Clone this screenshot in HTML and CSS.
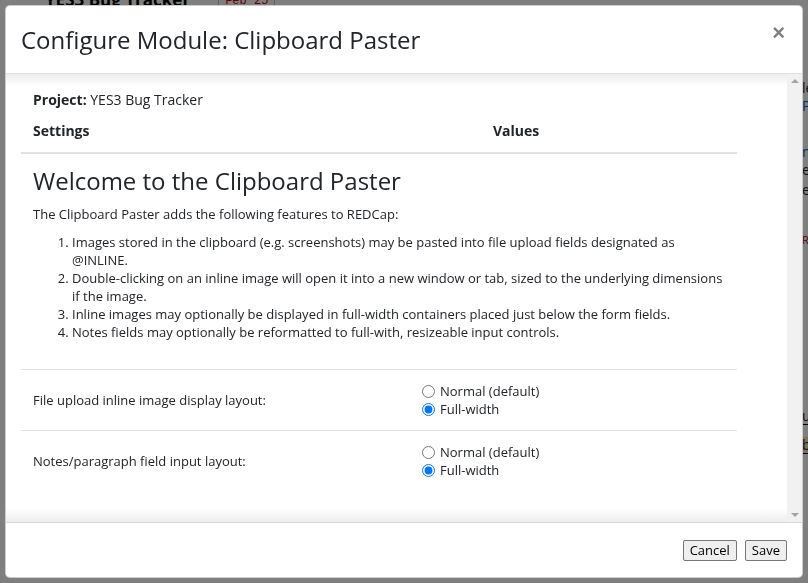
FILE: index.html
```html
<!DOCTYPE html>
<html>
<head>
<meta charset="utf-8">
<title>Configure Module</title>
<link rel="stylesheet" href="styles.css">
</head>
<body>
<div class="page">
  <div class="page-top">
    <div class="page-title">YES3 Bug Tracker</div>
    <div class="page-date">Feb 25</div>
  </div>
  <div class="page-side">
    <span class="s1">le</span>
    <span class="s2 blue">P</span>
    <span class="s3 blue">n</span>
    <span class="s4">e</span>
    <span class="s5">e</span>
    <span class="s6 red">RE</span>
    <span class="s9">u</span>
    <span class="s10">b</span>
  </div>
</div>
<div class="backdrop"></div>
<div class="modal">
  <div class="modal-header">
    <h4 class="modal-title">Configure Module: Clipboard Paster</h4>
    <button class="close" type="button">×</button>
  </div>
  <div class="modal-main">
    <div class="modal-body">
      <div class="project"><b>Project:</b> YES3 Bug Tracker</div>
      <div class="settings-head">
        <div class="col-s">Settings</div>
        <div class="col-v">Values</div>
      </div>
      <div class="intro">
        <h3 class="intro-title">Welcome to the Clipboard Paster</h3>
        <p>The Clipboard Paster adds the following features to REDCap:</p>
        <ol>
          <li>Images stored in the clipboard (e.g. screenshots) may be pasted into file upload fields designated as @INLINE.</li>
          <li>Double-clicking on an inline image will open it into a new window or tab, sized to the underlying dimensions if the image.</li>
          <li>Inline images may optionally be displayed in full-width containers placed just below the form fields.</li>
          <li>Notes fields may optionally be reformatted to full-with, resizeable input controls.</li>
        </ol>
      </div>
      <div class="setting-row">
        <div class="setting-label">File upload inline image display layout:</div>
        <div class="setting-values">
          <label class="opt"><input type="radio" name="img"><span>Normal (default)</span></label>
          <label class="opt"><input type="radio" name="img" checked><span>Full-width</span></label>
        </div>
      </div>
      <div class="setting-row">
        <div class="setting-label">Notes/paragraph field input layout:</div>
        <div class="setting-values">
          <label class="opt"><input type="radio" name="notes"><span>Normal (default)</span></label>
          <label class="opt"><input type="radio" name="notes" checked><span>Full-width</span></label>
        </div>
      </div>
    </div>
    <div class="scrollbar">
      <span class="arrow up"></span>
      <span class="arrow down"></span>
    </div>
  </div>
  <div class="modal-footer">
    <button type="button" class="btn">Cancel</button>
    <button type="button" class="btn">Save</button>
  </div>
</div>
</body>
</html>
```

FILE: styles.css
```css
html, body {
  margin: 0;
  padding: 0;
}
body {
  width: 808px;
  height: 583px;
  overflow: hidden;
  background: #fff;
  font-family: "Open Sans", "Liberation Sans", sans-serif;
  font-size: 13px;
  color: #212529;
}

/* background page (seen dimmed behind the dialog) */
.page {
  display: flex;
  height: 583px;
}
.page-top {
  display: flex;
  gap: 28px;
  padding-left: 45px;
  margin-top: -12px;
  height: 30px;
  align-items: flex-start;
}
.page-title {
  font-weight: 700;
  font-size: 17px;
  color: #000;
  line-height: 24px;
}
.page-date {
  font-family: "Liberation Mono", monospace;
  font-size: 12px;
  color: #c00;
  padding: 6px 6px 0;
  border-left: 1px solid #bbb;
  border-right: 1px solid #bbb;
  height: 22px;
}
.page-side {
  margin-left: auto;
  width: 6px;
  display: flex;
  flex-direction: column;
  font-size: 14px;
  line-height: 16px;
  overflow: hidden;
}
.page-side span { display: block; white-space: nowrap; }
.page-side .blue { color: #1a55c0; }
.page-side .red { color: #a01010; }
.s1 { margin-top: 80px; }
.s2 { margin-top: 2px; }
.s3 { margin-top: 30px; }
.s4 { margin-top: 2px; }
.s5 { margin-top: 4px; }
.s6 { margin-top: 34px; font-size: 11px; }
.s9 { margin-top: 160px; border-bottom: 1px solid #000; }
.s10 { margin-top: 12px; border-bottom: 1px solid #000; background: #f5e6b0; }

.backdrop {
  position: fixed;
  inset: 0;
  background: rgba(0, 0, 0, 0.5);
}

/* modal */
.modal {
  position: fixed;
  left: 5px;
  top: 5px;
  width: 798px;
  height: 573px;
  box-sizing: border-box;
  background: #fff;
  border: 1px solid rgba(0, 0, 0, 0.2);
  border-radius: 5px;
  display: flex;
  flex-direction: column;
  overflow: hidden;
}
.modal-header {
  height: 68px;
  box-sizing: border-box;
  flex: none;
  display: flex;
  align-items: center;
  justify-content: space-between;
  padding: 0 16px 0 15px;
  border-bottom: 1px solid #dee2e6;
}
.modal-title {
  margin: 0;
  font-size: 24px;
  font-weight: 400;
  line-height: 36px;
  color: #212529;
}
.close {
  align-self: flex-start;
  margin-top: 14px;
  margin-right: 1px;
  padding: 0;
  border: 0;
  background: transparent;
  font-family: "Liberation Sans", sans-serif;
  font-size: 22px;
  font-weight: 700;
  line-height: 26px;
  color: #000;
  opacity: 0.5;
}

.modal-main {
  flex: 1;
  display: flex;
  min-height: 0;
  border-bottom: 1px solid #d6d6d6;
}
.modal-body {
  flex: 1;
  overflow: hidden;
  padding: 16px 0 0 15px;
  background:
    linear-gradient(to bottom, rgba(0,0,0,0.07), rgba(0,0,0,0) 12px) top / 100% 12px no-repeat,
    linear-gradient(to top, rgba(0,0,0,0.07), rgba(0,0,0,0) 14px) bottom / 100% 14px no-repeat,
    #fff;
}
.project {
  width: 716px;
  box-sizing: border-box;
  padding-left: 12px;
  line-height: 20px;
  font-size: 14px;
}
.project b { font-weight: 700; }

.settings-head {
  width: 716px;
  display: grid;
  grid-template-columns: 460px 256px;
  border-bottom: 2px solid #dee2e6;
  font-weight: 700;
  font-size: 14px;
}
.settings-head > div {
  padding: 11px 12px 12px;
  line-height: 19px;
}

.intro {
  width: 716px;
  box-sizing: border-box;
  padding: 12px;
  line-height: 18px;
}
.intro-title {
  margin: 0 0 10px;
  font-size: 24px;
  font-weight: 400;
  line-height: 29px;
}
.intro p {
  margin: 0 0 10px;
}
.intro ol {
  margin: 0 0 16px;
  padding-left: 39px;
}

.setting-row {
  width: 716px;
  display: grid;
  grid-template-columns: 389px 327px;
  border-top: 1px solid #dee2e6;
  align-items: center;
}
.setting-label {
  padding: 12px;
  line-height: 18px;
}
.setting-values {
  padding: 12px;
  display: flex;
  flex-direction: column;
}
.opt {
  display: flex;
  align-items: center;
  height: 18px;
  gap: 5px;
}
.opt input {
  margin: 0;
  width: 13px;
  height: 13px;
}

.scrollbar {
  width: 15px;
  flex: none;
  background: #f1f1f1;
  display: flex;
  flex-direction: column;
  justify-content: space-between;
  align-items: center;
  padding: 5px 0;
  box-sizing: border-box;
}
.arrow {
  width: 0;
  height: 0;
  border-left: 4px solid transparent;
  border-right: 4px solid transparent;
}
.arrow.up { border-bottom: 4px solid #a3a3a3; }
.arrow.down { border-top: 4px solid #a3a3a3; }

.modal-footer {
  flex: none;
  height: 54px;
  box-sizing: border-box;
  display: flex;
  justify-content: flex-end;
  align-items: center;
  gap: 8px;
  padding: 0 15px 0 0;
}
.btn {
  font-family: "Open Sans", "Liberation Sans", sans-serif;
  font-size: 13px;
  height: 21px;
  padding: 0 6px;
  line-height: 18px;
  background: #efefef;
  border: 1px solid #767676;
  border-radius: 2px;
  color: #000;
}
```
